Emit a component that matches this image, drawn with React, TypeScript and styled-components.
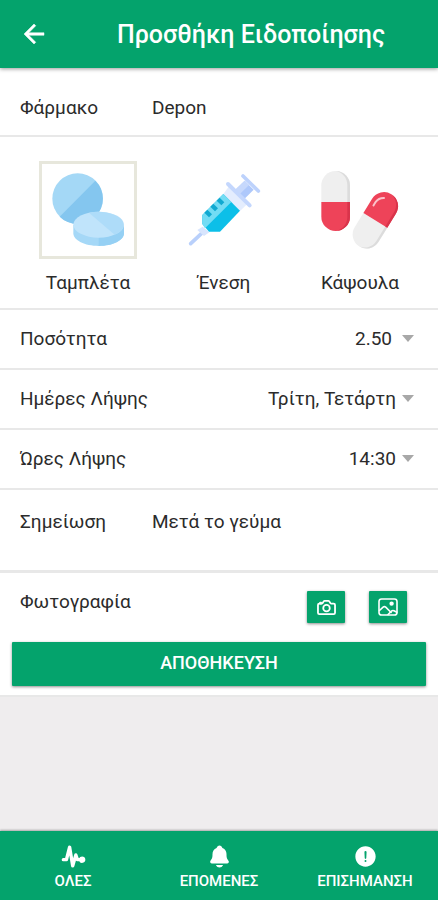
import React, { useState } from "react";
import styled, { createGlobalStyle } from "styled-components";
import {
  IoPulse,
  IoNotifications,
  IoAlertCircle,
  IoCameraOutline,
} from "react-icons/io5";
import { MdArrowBack } from "react-icons/md";

const green = "#04a36c";
const line = "#e8e8e8";
const ink = "#2b2b2b";

const GlobalStyle = createGlobalStyle`
  *, *::before, *::after { box-sizing: border-box; }
  body { margin: 0; background: #efedee; }
  button, input, select, textarea { font: inherit; color: inherit; }
`;

const Screen = styled.div`
  display: flex;
  flex-direction: column;
  min-height: 100vh;
  background: #efedee;
  color: ${ink};
  font-family: Roboto, "Noto Sans", sans-serif;
  font-size: 19px;
  line-height: 24px;
`;

const Header = styled.header`
  display: grid;
  grid-template-columns: 64px 1fr;
  align-items: center;
  height: 68px;
  background: ${green};
  color: #fff;
  box-shadow: 0 1px 4px rgba(0, 0, 0, 0.4);
  z-index: 1;
`;

const BackButton = styled.button`
  display: flex;
  justify-content: flex-end;
  padding: 0 15px 0 0;
  border: 0;
  background: none;
  cursor: pointer;
`;

const BackIcon = styled(MdArrowBack)`
  path:last-child {
    stroke: #fff;
    stroke-width: 0.4px;
  }
`;

const Title = styled.h1`
  margin: 0;
  padding: 2px 0 0;
  text-align: center;
  font-size: 25px;
  line-height: 32px;
  font-weight: 500;
`;

const Form = styled.form`
  background: #fff;
  border-bottom: 2px solid ${line};
`;

const Row = styled.div<{ $thick?: boolean }>`
  display: flex;
  align-items: center;
  height: 60px;
  padding: 0 24px 0 20px;
  border-bottom: ${({ $thick }) => ($thick ? 3 : 2)}px solid ${line};
`;

const DrugRow = styled(Row)`
  height: 69px;
  padding-top: 12px;
`;

const FieldLabel = styled.label`
  flex: none;
  min-width: 132px;
`;

const TextField = styled.input`
  flex: 1;
  min-width: 0;
  padding: 0;
  border: 0;
  outline: 0;
  background: none;
`;

const NoteRow = styled(Row)`
  align-items: flex-start;
  height: 83px;
  padding-top: 20px;
`;

const NoteField = styled.textarea`
  flex: 1;
  min-width: 0;
  height: 48px;
  padding: 0;
  border: 0;
  outline: 0;
  resize: none;
  background: none;
`;

const Types = styled.fieldset`
  display: grid;
  grid-template-columns: repeat(3, 1fr);
  margin: 0;
  padding: 24px 10px 13px 20px;
  border: 0;
  border-bottom: 2px solid ${line};
`;

const TypeOption = styled.label`
  display: flex;
  flex-direction: column;
  align-items: center;
  gap: 12px;
  cursor: pointer;
`;

const HiddenRadio = styled.input`
  appearance: none;
  position: absolute;
  margin: 0;
  width: 1px;
  height: 1px;
  opacity: 0;
`;

const Frame = styled.span<{ $selected: boolean }>`
  display: flex;
  width: 98px;
  height: 98px;
  border: 3px solid ${({ $selected }) => ($selected ? "#e7e7dc" : "transparent")};
`;

const Select = styled.select<{ $gap: number }>`
  flex: 1;
  min-width: 0;
  padding: 0 ${({ $gap }) => $gap}px 0 0;
  border: 0;
  outline: 0;
  appearance: none;
  background: none;
  text-align: right;
  text-align-last: right;
  cursor: pointer;
`;

const Caret = styled.svg`
  flex: none;
`;

const PhotoRow = styled.div`
  display: flex;
  align-items: flex-start;
  justify-content: space-between;
  padding: 17px 31px 19px 20px;
`;

const PhotoButtons = styled.div`
  display: flex;
  gap: 24px;
  padding-top: 1px;
`;

const IconButton = styled.button`
  display: grid;
  place-items: center;
  width: 38px;
  height: 32px;
  padding: 0;
  border: 0;
  border-radius: 1px;
  background: ${green};
  color: #fff;
  box-shadow: 0 1px 3px rgba(0, 0, 0, 0.45);
  cursor: pointer;
`;

const CameraIcon = styled(IoCameraOutline)`
  path, circle {
    stroke-width: 44px;
  }
`;

const SaveArea = styled.div`
  padding: 0 12px 9px;
`;

const SaveButton = styled.button`
  display: block;
  width: 100%;
  height: 44px;
  padding: 0 0 2px;
  border: 0;
  border-radius: 1px;
  background: ${green};
  color: #fff;
  font-size: 18px;
  font-weight: 500;
  box-shadow: 0 1px 3px rgba(0, 0, 0, 0.45);
  cursor: pointer;
`;

const Tabs = styled.nav`
  display: grid;
  grid-template-columns: repeat(3, 1fr);
  height: 69px;
  margin-top: auto;
  background: ${green};
  box-shadow: 0 -1px 2px rgba(0, 0, 0, 0.3);
`;

const Tab = styled.a`
  display: flex;
  flex-direction: column;
  align-items: center;
  padding-top: 13px;
  color: #fff;
  font-size: 15px;
  line-height: 24px;
  font-weight: 500;
  text-decoration: none;
`;

const PulseIcon = styled(IoPulse)`
  path {
    stroke-width: 37px;
  }
`;

const PictureIcon = () => (
  <svg width="20" height="18" viewBox="0 0 20 18" fill="none" stroke="currentColor" strokeWidth="1.6" strokeLinecap="round" strokeLinejoin="round" aria-hidden="true">
    <rect x="1" y="1" width="18" height="16" rx="2.6" />
    <path d="M1.5 12.5l3.6-3.4q1.3-1.1 2.6 0l5.4 5.4" />
    <path d="M10 16.5l3.4-3.3q1.2-1.1 2.6-.4l2.8 1.4" />
    <circle cx="13.6" cy="5.6" r="1.4" fill="currentColor" />
  </svg>
);

const TabletArt = () => (
  <svg width="92" height="92" viewBox="66 42 276 276" aria-hidden="true">
    <circle cx="173" cy="146" r="76" fill="#a4d8f6" />
    <path d="M226 92A76 76 0 0 1 119 200Z" fill="#84c6ef" />
    <path d="M160 224v26c0 21 34 38 76 38s76-17 76-38v-26z" fill="#a5d8f7" />
    <path d="M236 288c42 0 76-17 76-38v-26l-76 34z" fill="#95d0f4" />
    <ellipse cx="236" cy="224" rx="76" ry="39" fill="#c0e4fb" />
    <path d="M207 188A76 39 0 0 1 284 254Z" fill="#aedcf9" />
  </svg>
);

const SyringeArt = () => (
  <svg width="92" height="92" viewBox="54 42 276 276" aria-hidden="true">
    <path d="M92 281L128 247" stroke="#b9d0fb" strokeWidth="11" strokeLinecap="round" />
    <path d="M112 240l16-10 20 17-16 11z" fill="#d8e5fd" />
    <path d="M225 120l29-28 27 27-28 28z" fill="#aec8fb" />
    <path d="M225 120l29-28 13 13-28 28z" fill="#c6d8fc" />
    <path d="M249 78L295 123" stroke="#bdd2fc" strokeWidth="11" strokeLinecap="round" />
    <path d="M190 132L207 109 261 163 240 183z" fill="#e4edfe" />
    <path d="M204 102L269 166" stroke="#c4d7fd" strokeWidth="12" strokeLinecap="round" />
    <path d="M190 132L240 182 180 245H147L127 222V195z" fill="#0cbfe8" />
    <path d="M190 132L214 156 135 235 127 222V195z" fill="#73dcf4" />
    <path d="M179 143l14 14-9 9-14-14zM160 161l14 14-9 9-14-14zM142 179l14 14-9 9-14-14z" fill="#10a9d1" />
  </svg>
);

const CapsuleArt = () => (
  <svg width="92" height="92" viewBox="42 42 276 276" aria-hidden="true">
    <path d="M64 157v-51a43 43 0 0 1 86 0v51z" fill="#efefef" />
    <path d="M108 63a43 43 0 0 1 42 43v51h-8v-51c0-23-14-38-34-43z" fill="#dcdcdc" />
    <path d="M64 156v44a43 43 0 0 0 86 0v-44z" fill="#ee4359" />
    <path d="M142 156h8v44a43 43 0 0 1-43 43c20-4 35-20 35-43z" fill="#d9344b" />
    <g transform="translate(226 211) rotate(31.5)">
      <path d="M-42 0v50a42 42 0 0 0 84 0V0z" fill="#efefef" />
      <path d="M35 0h7v50A42 42 0 0 1 0 92c20-4 35-20 35-42z" fill="#dcdcdc" />
      <path d="M-42 0v-50a42 42 0 0 1 84 0V0z" fill="#ee4359" />
      <path d="M35 0h7v-50A42 42 0 0 0 0-92c20 4 35 20 35 42z" fill="#d9344b" />
      <path d="M-28-35v-13q1-15 15-23" fill="none" stroke="#fac3cb" strokeWidth="6" strokeLinecap="round" />
    </g>
  </svg>
);

const types = [
  { id: "tablet", label: "Ταμπλέτα", Art: TabletArt },
  { id: "injection", label: "Ένεση", Art: SyringeArt },
  { id: "capsule", label: "Κάψουλα", Art: CapsuleArt },
];

const pickers = [
  { id: "dose", label: "Ποσότητα", value: "2.50", gap: 10 },
  { id: "days", label: "Ημέρες Λήψης", value: "Τρίτη, Τετάρτη", gap: 6 },
  { id: "hours", label: "Ώρες Λήψης", value: "14:30", gap: 6 },
];

const tabs = [
  { label: "ΟΛΕΣ", Icon: PulseIcon },
  { label: "ΕΠΟΜΕΝΕΣ", Icon: IoNotifications },
  { label: "ΕΠΙΣΗΜΑΝΣΗ", Icon: IoAlertCircle },
];

export default function App() {
  const [type, setType] = useState("tablet");
  return (
    <Screen>
      <GlobalStyle />
      <Header>
        <BackButton type="button" aria-label="Πίσω">
          <BackIcon size={30} color="#fff" />
        </BackButton>
        <Title>Προσθήκη Ειδοποίησης</Title>
      </Header>
      <Form onSubmit={(e) => e.preventDefault()}>
        <DrugRow>
          <FieldLabel htmlFor="drug">Φάρμακο</FieldLabel>
          <TextField id="drug" defaultValue="Depon" />
        </DrugRow>
        <Types aria-label="Μορφή">
          {types.map(({ id, label, Art }) => (
            <TypeOption key={id}>
              <HiddenRadio
                type="radio"
                name="type"
                checked={type === id}
                onChange={() => setType(id)}
              />
              <Frame $selected={type === id}>
                <Art />
              </Frame>
              {label}
            </TypeOption>
          ))}
        </Types>
        {pickers.map(({ id, label, value, gap }) => (
          <Row key={id}>
            <FieldLabel htmlFor={id}>{label}</FieldLabel>
            <Select id={id} $gap={gap} defaultValue={value}>
              <option>{value}</option>
            </Select>
            <Caret width="12" height="8" viewBox="0 0 12 8" aria-hidden="true">
              <path d="M0 0h12L6 7z" fill="#a8a8a8" />
            </Caret>
          </Row>
        ))}
        <NoteRow $thick>
          <FieldLabel htmlFor="note">Σημείωση</FieldLabel>
          <NoteField id="note" defaultValue="Μετά το γεύμα" />
        </NoteRow>
        <PhotoRow>
          <span>Φωτογραφία</span>
          <PhotoButtons>
            <IconButton type="button" aria-label="Κάμερα">
              <CameraIcon size={21} />
            </IconButton>
            <IconButton type="button" aria-label="Συλλογή">
              <PictureIcon />
            </IconButton>
          </PhotoButtons>
        </PhotoRow>
        <SaveArea>
          <SaveButton type="submit">ΑΠΟΘΗΚΕΥΣΗ</SaveButton>
        </SaveArea>
      </Form>
      <Tabs>
        {tabs.map(({ label, Icon }) => (
          <Tab key={label} href="#">
            <Icon size={25} />
            {label}
          </Tab>
        ))}
      </Tabs>
    </Screen>
  );
}
